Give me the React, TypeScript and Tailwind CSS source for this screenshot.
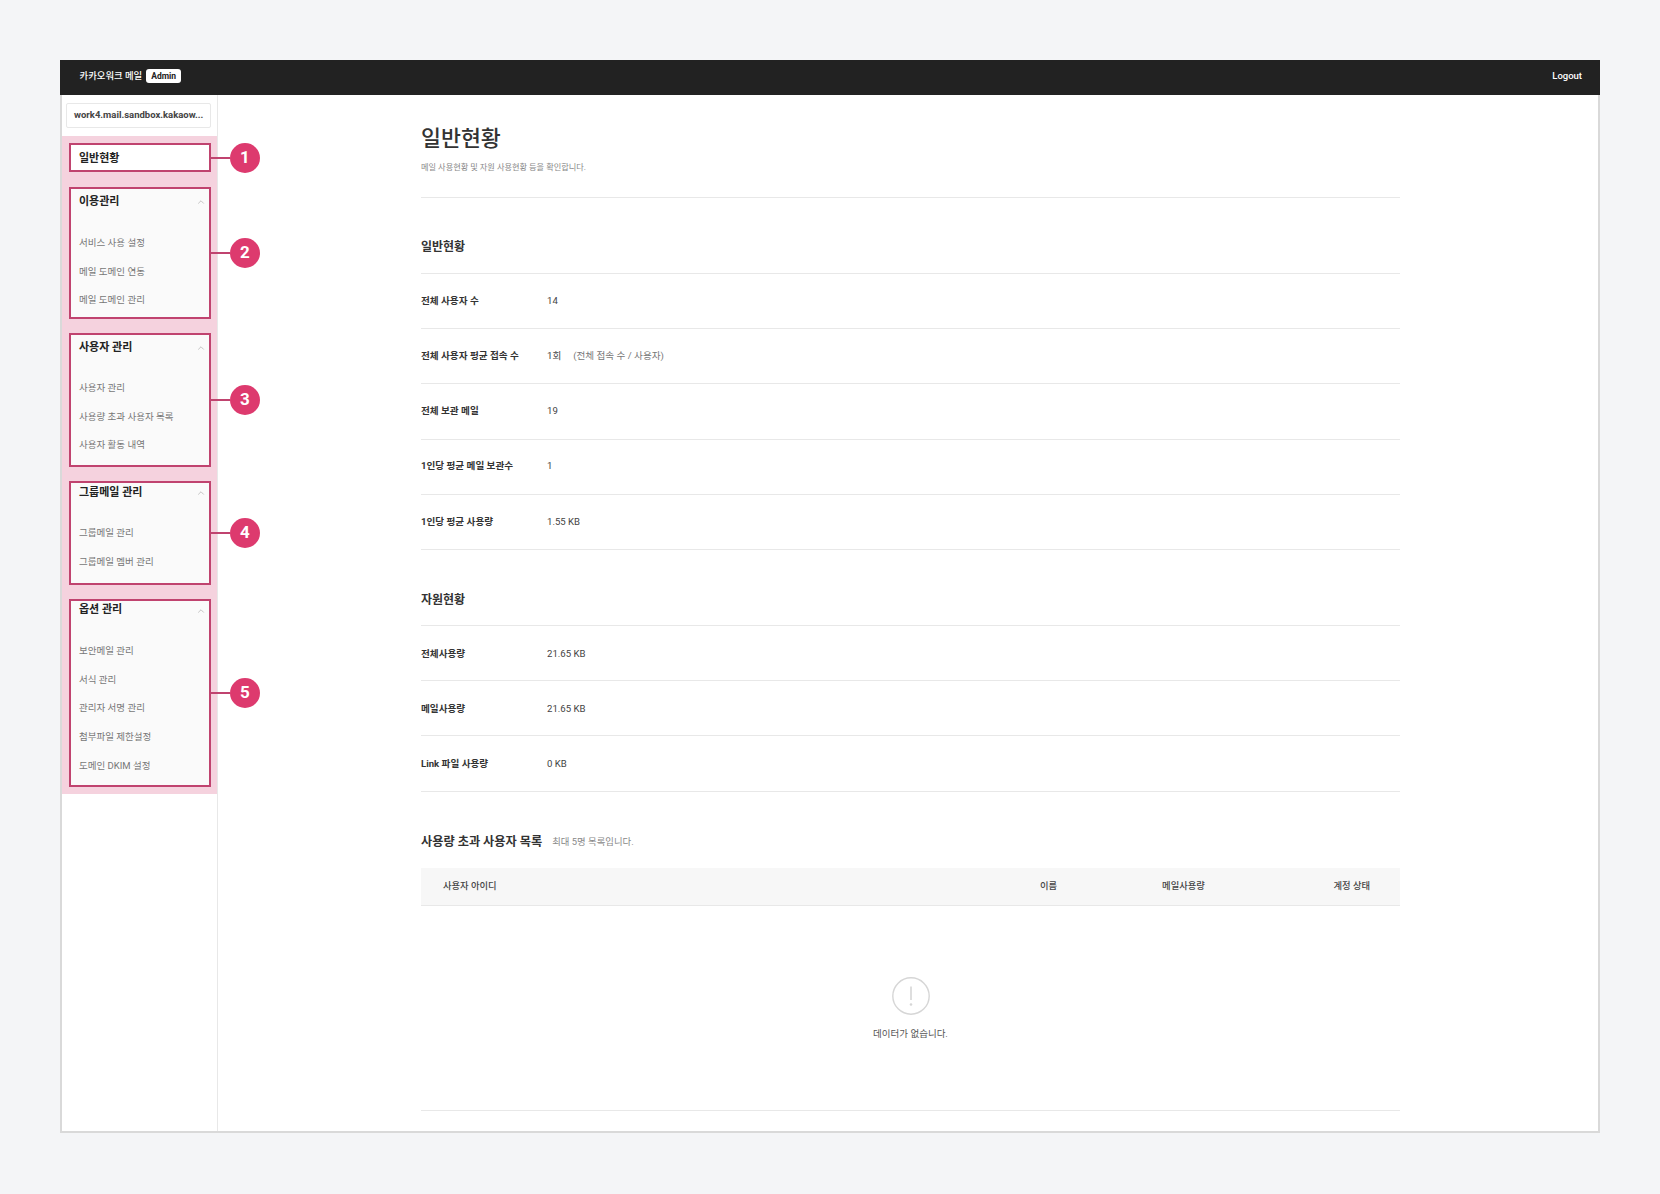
import { ChevronUp } from "lucide-react";

const font = "[font-family:Roboto,'Noto_Sans_CJK_KR',sans-serif]";

type Group = { title: string; items: string[]; badge: number; h: string; mt: string; head: string; listMt: string };

const groups: Group[] = [
  { title: "이용관리", badge: 2, h: "h-[132px]", mt: "mt-[15px]", head: "h-[26px]", listMt: "mt-[14px]", items: ["서비스 사용 설정", "메일 도메인 연동", "메일 도메인 관리"] },
  { title: "사용자 관리", badge: 3, h: "h-[134px]", mt: "mt-[14px]", head: "h-[26px]", listMt: "mt-[13px]", items: ["사용자 관리", "사용량 초과 사용자 목록", "사용자 활동 내역"] },
  { title: "그룹메일 관리", badge: 4, h: "h-[104px]", mt: "mt-[14px]", head: "h-[20px]", listMt: "mt-[16px]", items: ["그룹메일 관리", "그룹메일 멤버 관리"] },
  { title: "옵션 관리", badge: 5, h: "h-[188px]", mt: "mt-[14px]", head: "h-[19px]", listMt: "mt-[17px]", items: ["보안메일 관리", "서식 관리", "관리자 서명 관리", "첨부파일 제한설정", "도메인 DKIM 설정"] },
];

const general = [
  { label: "전체 사용자 수", value: "14" },
  { label: "전체 사용자 평균 접속 수", value: "1회", note: "(전체 접속 수 / 사용자)" },
  { label: "전체 보관 메일", value: "19" },
  { label: "1인당 평균 메일 보관수", value: "1" },
  { label: "1인당 평균 사용량", value: "1.55 KB" },
];

const resources = [
  { label: "전체사용량", value: "21.65 KB" },
  { label: "메일사용량", value: "21.65 KB" },
  { label: "Link 파일 사용량", value: "0 KB" },
];

function Badge({ n }: { n: number }) {
  return (
    <div className="absolute left-full top-1/2 flex -translate-y-1/2 items-center">
      <div className="h-[2px] w-[21px] bg-[#c0436f]" />
      <div className="flex h-[30px] w-[30px] items-center justify-center rounded-full bg-[#dd3a6e] text-[17px] font-bold text-white">
        {n}
      </div>
    </div>
  );
}

function NavGroup({ group }: { group: Group }) {
  return (
    <div className={`relative ${group.mt} ${group.h} border-[2px] border-[#c0436f] bg-[#fafafa] pl-[8px]`}>
      <div className={`flex ${group.head} items-center justify-between pr-[3px]`}>
        <span className="text-[11px] font-bold text-[#222]">{group.title}</span>
        <ChevronUp className="h-[10px] w-[10px] text-[#bbb]" strokeWidth={2} />
      </div>
      <ul className={group.listMt}>
        {group.items.map((item) => (
          <li key={item} className="flex h-[28.6px] items-center text-[9.5px] text-[#777]">{item}</li>
        ))}
      </ul>
      <Badge n={group.badge} />
    </div>
  );
}

function InfoRow({ label, value, note, low }: { label: string; value: string; note?: string; low?: boolean }) {
  return (
    <div className={`flex h-[55.2px] items-center border-b border-[#e8e8e8] text-[9.6px] ${low ? "pt-[2px]" : ""}`}>
      <div className="w-[126px] font-bold text-[#333]">{label}</div>
      <div className="text-[#444]">{value}</div>
      {note && <div className="ml-[12px] text-[#777]">{note}</div>}
    </div>
  );
}

function SectionTitle({ children, low }: { children: string; low?: boolean }) {
  return (
    <div className={`flex h-[53px] items-center border-b border-[#e8e8e8] text-[12px] font-bold text-[#333] ${low ? "pt-[3px]" : "pb-[1px]"}`}>
      {children}
    </div>
  );
}

export default function App() {
  return (
    <div className={`${font} min-h-[1194px] bg-[#f4f5f7] px-[60px] pt-[60px]`}>
      <div className="flex h-[1073px] w-[1540px] flex-col border-x-2 border-b-2 border-[#d9d9d9] bg-white">
        <header className="-mx-[2px] flex h-[35px] shrink-0 items-center justify-between bg-[#222] pb-[2px] pl-[19.5px] pr-[18px]">
          <div className="flex items-center gap-[4px]">
            <span className="text-[9.4px] font-medium text-white">카카오워크 메일</span>
            <span className="flex h-[14px] items-center rounded-[3px] bg-white px-[5px] text-[8.5px] font-bold text-[#222]">Admin</span>
          </div>
          <span className="text-[9.5px] font-medium text-white">Logout</span>
        </header>

        <div className="flex min-h-0 flex-1">
          <aside className="w-[156px] shrink-0 border-r border-[#e8e8e8]">
            <div className="flex h-[41px] items-start px-[4px] pt-[8px]">
              <div className="flex h-[25px] w-[145px] items-center rounded-[2px] border border-[#e8e8e8] px-[7px]">
                <span className="whitespace-nowrap text-[9.5px] font-bold text-[#444]">work4.mail.sandbox.kakaow...</span>
              </div>
            </div>
            <nav className="h-[658px] bg-[#f5d2de] pl-[7px] pr-[6px] pt-[7px]">
              <div className="relative flex h-[29px] items-center border-[2px] border-[#c0436f] bg-white pl-[8px] pt-[3px]">
                <span className="text-[11px] font-bold text-[#222]">일반현황</span>
                <Badge n={1} />
              </div>
              {groups.map((g) => (
                <NavGroup key={g.title} group={g} />
              ))}
            </nav>
          </aside>

          <main className="ml-[203px] w-[979px]">
            <div className="h-[103px] border-b border-[#e8e8e8] pt-[29px]">
              <h1 className="text-[21.7px] font-medium leading-[30px] text-[#333]">일반현황</h1>
              <p className="mt-[6px] text-[8.2px] leading-[14px] text-[#888]">메일 사용현황 및 자원 사용현황 등을 확인합니다.</p>
            </div>

            <div className="mt-[23px]">
              <SectionTitle>일반현황</SectionTitle>
              {general.map((r) => (
                <InfoRow key={r.label} {...r} />
              ))}
            </div>

            <div className="mt-[23px]">
              <SectionTitle low>자원현황</SectionTitle>
              {resources.map((r) => (
                <InfoRow key={r.label} {...r} low />
              ))}
            </div>

            <div className="mt-[36px] flex h-[30px] items-center gap-[10px]">
              <span className="text-[12.2px] font-bold text-[#333]">사용량 초과 사용자 목록</span>
              <span className="text-[9.4px] text-[#888]">최대 5명 목록입니다.</span>
            </div>

            <div className="mt-[10px] flex h-[38px] items-center border-b border-[#e8e8e8] bg-[#f7f7f7] text-[9.3px] font-medium text-[#444]">
              <div className="flex-1 pl-[22px]">사용자 아이디</div>
              <div className="w-[135px] text-center">이름</div>
              <div className="w-[135px] text-center">메일사용량</div>
              <div className="w-[149px] pr-[30px] text-right">계정 상태</div>
            </div>

            <div className="flex h-[205px] flex-col items-center border-b border-[#e8e8e8] pt-[71px]">
              <svg width="38" height="38" viewBox="0 0 38 38" fill="none">
                <circle cx="19" cy="19" r="18.2" stroke="#d6d6d6" strokeWidth="1.4" />
                <path d="M19 9.5V23" stroke="#d6d6d6" strokeWidth="1.6" />
                <circle cx="19" cy="27.5" r="1.3" fill="#d6d6d6" />
              </svg>
              <p className="mt-[12px] text-[9.5px] leading-[14px] text-[#555]">데이터가 없습니다.</p>
            </div>
          </main>
        </div>
      </div>
    </div>
  );
}
